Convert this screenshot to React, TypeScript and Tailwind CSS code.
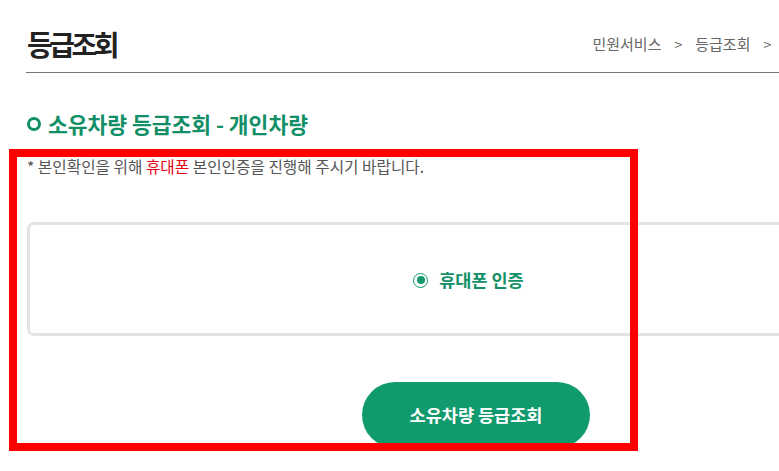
import React from 'react';

const crumbs = ['민원서비스', '등급조회', '소유차량 등급조회'];

export default function App() {
  return (
    <div
      className="relative w-[779px] h-[471px] overflow-hidden bg-white"
      style={{ fontFamily: '"Noto Sans CJK KR", "Noto Sans", sans-serif' }}
    >
      <div className="ml-[26px] w-[900px]">
        {/* page header */}
        <div className="flex items-center justify-between h-[73px] pt-[16px] border-b border-[#777777]">
          <h1 className="pl-[1px] text-[28px] font-bold leading-[34px] tracking-[-3.5px] text-[#222222]">등급조회</h1>
          <div className="mr-[26px] flex items-center gap-[13px] text-[15px] text-[#666666] whitespace-nowrap">
            {crumbs.map((c, i) => (
              <React.Fragment key={c}>
                {i > 0 && <span className="text-[14px]">&gt;</span>}
                <span className={i === crumbs.length - 1 ? 'ml-[2px]' : ''}>{c}</span>
              </React.Fragment>
            ))}
          </div>
        </div>

        {/* section title */}
        <div className="mt-[36px] flex items-center gap-[7px] pl-[1px]">
          <span className="w-[14px] h-[14px] rounded-full border-[3px] border-[#138f68]" />
          <h2 className="text-[21.5px] font-bold leading-[30px] text-[#138f68]">소유차량 등급조회 - 개인차량</h2>
        </div>

        <p className="mt-[17px] pl-[1px] text-[15.7px] leading-[22px] text-[#555555]">
          * 본인확인을 위해 <span className="text-[#e60012]">휴대폰</span> 본인인증을 진행해 주시기 바랍니다.
        </p>

        {/* auth option box */}
        <div className="mt-[44px] ml-[1px] h-[114px] border-[3px] border-[#e4e4e4] rounded-[7px] flex items-center justify-center">
          <label className="flex items-center gap-[11px] mr-[16px] pt-[2px]">
            <span className="w-[15px] h-[15px] rounded-full border border-[#139a6f] flex items-center justify-center">
              <span className="w-[8px] h-[8px] rounded-full bg-[#139a6f]" />
            </span>
            <span className="text-[17.5px] font-bold text-[#138f68]">휴대폰 인증</span>
          </label>
        </div>

        <div className="mt-[46px] flex justify-center">
          <button className="w-[228px] h-[66px] rounded-full bg-[#119a6e] text-white text-[17.5px] font-bold">
            소유차량 등급조회
          </button>
        </div>
      </div>

      {/* annotation frame */}
      <div className="absolute left-[9px] top-[149px] w-[629px] h-[302px] border-8 border-[#ff0000]" />
    </div>
  );
}
